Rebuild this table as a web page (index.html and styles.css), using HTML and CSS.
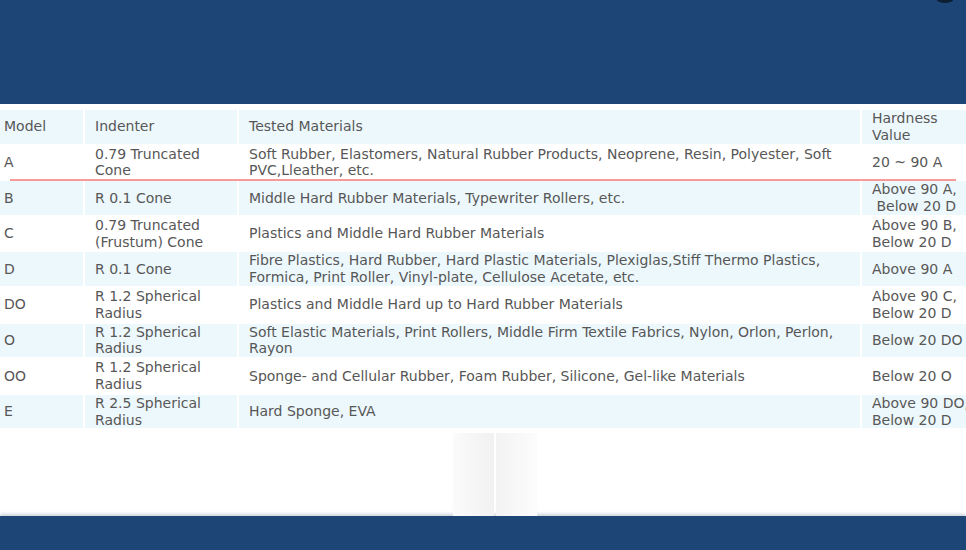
FILE: index.html
```html
<!DOCTYPE html>
<html>
<head>
<meta charset="utf-8">
<link rel="stylesheet" href="styles.css">
</head>
<body>
<div class="page">
  <header class="top"><span class="dot"></span></header>
  <main class="content">
    <table class="spec">
      <colgroup>
        <col class="c1"><col class="c2"><col class="c3"><col class="c4">
      </colgroup>
      <tr class="blue"><td>Model</td><td>Indenter</td><td>Tested Materials</td><td>Hardness<br>Value</td></tr>
      <tr class="white"><td>A</td><td>0.79 Truncated<br>Cone</td><td>Soft Rubber, Elastomers, Natural Rubber Products, Neoprene, Resin, Polyester, Soft PVC,Lleather, etc.</td><td>20 ~ 90 A</td></tr>
      <tr class="blue"><td>B</td><td>R 0.1 Cone</td><td>Middle Hard Rubber Materials, Typewriter Rollers, etc.</td><td>Above 90 A,<br>&nbsp;Below 20 D</td></tr>
      <tr class="white"><td>C</td><td>0.79 Truncated<br>(Frustum) Cone</td><td>Plastics and Middle Hard Rubber Materials</td><td>Above 90 B,<br>Below 20 D</td></tr>
      <tr class="blue"><td>D</td><td>R 0.1 Cone</td><td>Fibre Plastics, Hard Rubber, Hard Plastic Materials, Plexiglas,Stiff Thermo Plastics, Formica, Print Roller, Vinyl-plate, Cellulose Acetate, etc.</td><td>Above 90 A</td></tr>
      <tr class="white"><td>DO</td><td>R 1.2 Spherical<br>Radius</td><td>Plastics and Middle Hard up to Hard Rubber Materials</td><td>Above 90 C,<br>Below 20 D</td></tr>
      <tr class="blue"><td>O</td><td>R 1.2 Spherical<br>Radius</td><td>Soft Elastic Materials, Print Rollers, Middle Firm Textile Fabrics, Nylon, Orlon, Perlon, Rayon</td><td>Below 20 DO</td></tr>
      <tr class="white"><td>OO</td><td>R 1.2 Spherical<br>Radius</td><td>Sponge- and Cellular Rubber, Foam Rubber, Silicone, Gel-like Materials</td><td>Below 20 O</td></tr>
      <tr class="blue"><td>E</td><td>R 2.5 Spherical<br>Radius</td><td>Hard Sponge, EVA</td><td>Above 90 DO,<br>Below 20 D</td></tr>
    </table>
    <div class="shade"><span></span><span></span></div>
    <div class="redline"></div>
  </main>
  <footer class="bottom"></footer>
</div>
</body>
</html>
```
FILE: styles.css
```css
html, body {
  margin: 0;
  padding: 0;
  width: 966px;
  height: 550px;
  overflow: hidden;
  background: #fff;
}
.page {
  display: flex;
  flex-direction: column;
  height: 550px;
  overflow: hidden;
}
.top {
  height: 104px;
  background: #1d4676;
  flex: none;
  position: relative;
}
.dot {
  position: absolute;
  left: 937px;
  top: -3px;
  width: 16px;
  height: 6px;
  border-radius: 50%;
  background: #0d1f33;
}
.content {
  flex: 1;
  position: relative;
  padding-top: 4px;
  overflow: hidden;
}
.spec {
  border-collapse: separate;
  border-spacing: 2px;
  margin-left: -8px;
  table-layout: fixed;
  width: 1000px;
  font-family: "DejaVu Sans", Verdana, sans-serif;
  font-size: 14px;
  color: #575757;
}
.c1 { width: 89px; }
.c2 { width: 152px; }
.c3 { width: 621px; }
.c4 { width: 130px; }
.spec td {
  height: 33.6px;
  padding: 0 0 0 10px;
  line-height: 16.8px;
  vertical-align: middle;
}
.spec td:last-child { white-space: nowrap; }
.spec tr.blue td { background: #edf8fd; }
.spec tr.white td { background: #fff; }
.redline {
  position: absolute;
  left: 10px;
  top: 75px;
  width: 946px;
  height: 2px;
  background: #f79a9a;
}
.shade {
  position: absolute;
  left: 453px;
  top: 329px;
  width: 84px;
  height: 83px;
  display: flex;
  gap: 2px;
}
.shade span {
  flex: 1;
  background: linear-gradient(to right, #fbfbfb, #f1f1f1);
}
.shade span + span {
  background: linear-gradient(to right, #f3f3f3, #fcfcfc);
}
.bottom {
  height: 34px;
  flex: none;
  background: #1d4676;
  box-shadow: 0 -2px 3px rgba(60, 80, 110, 0.25);
}
```
